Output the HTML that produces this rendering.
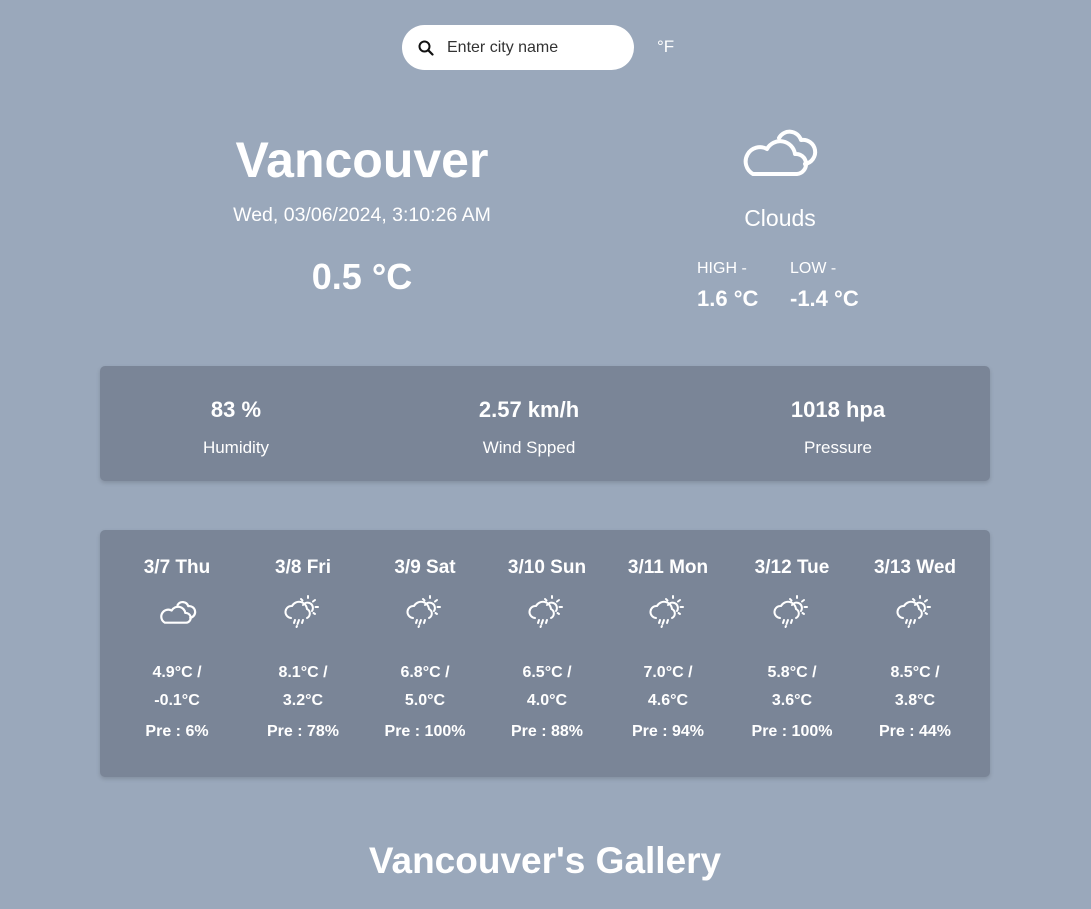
<!DOCTYPE html>
<html><head><meta charset="utf-8"><style>
*{margin:0;padding:0;box-sizing:border-box}
body{width:1091px;height:909px;background:#9aa8bb;font-family:"Liberation Sans","DejaVu Sans",sans-serif;color:#fff;position:relative;overflow:hidden}
.a{position:absolute;white-space:nowrap}
.c{transform:translateX(-50%);text-align:center}
.search{left:402px;top:25px;width:232px;height:45px;background:#fff;border-radius:23px}
.search span{position:absolute;left:45px;top:14px;color:#333;font-size:16px}
.panel{position:absolute;left:100px;width:890px;background:#7a8597;border-radius:5px;box-shadow:0 2px 4px rgba(0,0,0,.15)}
.b{font-weight:bold}
</style></head><body>
<svg width="0" height="0" style="position:absolute"><defs>
<g id="cl" fill="none" stroke="#fff" stroke-linejoin="round" stroke-linecap="round"><path d="M38 14A12 12 0 0 1 60 16A10 10 0 0 1 64 40"/><path d="M12 50A13 13 0 0 1 26 25A15 15 0 0 1 54 30A10 10 0 0 1 56 50Z"/></g>
<g id="rn" fill="none" stroke="#fff" stroke-width="2" stroke-linecap="round"><path d="M9 25a6 6 0 0 1 1-12a8 8 0 0 1 15 3a5 5 0 0 1 0 9"/><path d="M21 12a5 5 0 0 1 9 6"/><path d="M26 3v2M33 7l-2 1.5M36 14h-2.5M33 21l-1.5-1M19 6l1.5 1.5"/><path d="M13 27l-1 3M17 27l-1.5 4M21 27l-1 3M15 33l-.5 1"/></g>
</defs></svg>
<div class="a search">
<svg style="position:absolute;left:16px;top:15px" width="16" height="16" viewBox="0 0 16 16"><circle cx="6.5" cy="6.5" r="5" fill="none" stroke="#111" stroke-width="2"/><path d="M10.2 10.2L14.5 14.5" stroke="#111" stroke-width="2.2" stroke-linecap="round"/></svg>
<span>Enter city name</span></div>
<div class="a" style="left:657px;top:37px;font-size:17px">°F</div>

<div class="a c b" style="left:362px;top:131px;font-size:50px">Vancouver</div>
<div class="a c" style="left:362px;top:204px;font-size:19.5px">Wed, 03/06/2024, 3:10:26 AM</div>
<div class="a c b" style="left:362px;top:256px;font-size:36px">0.5 °C</div>

<svg class="a" style="left:741px;top:124px" width="78" height="54" viewBox="0 0 78 54" stroke-width="4"><use href="#cl"/></svg>
<div class="a c" style="left:780px;top:205px;font-size:23px">Clouds</div>
<div class="a" style="left:697px;top:260px;font-size:16px">HIGH -</div>
<div class="a b" style="left:697px;top:286px;font-size:22px">1.6 °C</div>
<div class="a" style="left:790px;top:260px;font-size:16px">LOW -</div>
<div class="a b" style="left:790px;top:286px;font-size:22px">-1.4 °C</div>

<div class="panel" style="top:366px;height:115px"></div>
<div class="a c b" style="left:236px;top:397px;font-size:22px">83 %</div>
<div class="a c" style="left:236px;top:438px;font-size:17px">Humidity</div>
<div class="a c b" style="left:529px;top:397px;font-size:22px">2.57 km/h</div>
<div class="a c" style="left:529px;top:438px;font-size:17px">Wind Spped</div>
<div class="a c b" style="left:838px;top:397px;font-size:22px">1018 hpa</div>
<div class="a c" style="left:838px;top:438px;font-size:17px">Pressure</div>

<div class="panel" style="top:530px;height:247px"></div>
<div class="a c b" style="left:177px;top:557px;font-size:19px">3/7 Thu</div>
<div class="a c b" style="left:303px;top:557px;font-size:19px">3/8 Fri</div>
<div class="a c b" style="left:425px;top:557px;font-size:19px">3/9 Sat</div>
<div class="a c b" style="left:547px;top:557px;font-size:19px">3/10 Sun</div>
<div class="a c b" style="left:668px;top:557px;font-size:19px">3/11 Mon</div>
<div class="a c b" style="left:792px;top:557px;font-size:19px">3/12 Tue</div>
<div class="a c b" style="left:915px;top:557px;font-size:19px">3/13 Wed</div>

<svg class="a" style="left:159px;top:598px" width="38" height="27" viewBox="0 0 78 54" stroke-width="4.5"><use href="#cl"/></svg>
<svg class="a" style="left:282px;top:593px" width="40" height="38" viewBox="0 0 40 38"><use href="#rn"/></svg>
<svg class="a" style="left:404px;top:593px" width="40" height="38" viewBox="0 0 40 38"><use href="#rn"/></svg>
<svg class="a" style="left:526px;top:593px" width="40" height="38" viewBox="0 0 40 38"><use href="#rn"/></svg>
<svg class="a" style="left:647px;top:593px" width="40" height="38" viewBox="0 0 40 38"><use href="#rn"/></svg>
<svg class="a" style="left:771px;top:593px" width="40" height="38" viewBox="0 0 40 38"><use href="#rn"/></svg>
<svg class="a" style="left:894px;top:593px" width="40" height="38" viewBox="0 0 40 38"><use href="#rn"/></svg>

<div class="a c b" style="left:177px;top:659px;font-size:16px;line-height:28px">4.9°C /<br>-0.1°C</div>
<div class="a c b" style="left:303px;top:659px;font-size:16px;line-height:28px">8.1°C /<br>3.2°C</div>
<div class="a c b" style="left:425px;top:659px;font-size:16px;line-height:28px">6.8°C /<br>5.0°C</div>
<div class="a c b" style="left:547px;top:659px;font-size:16px;line-height:28px">6.5°C /<br>4.0°C</div>
<div class="a c b" style="left:668px;top:659px;font-size:16px;line-height:28px">7.0°C /<br>4.6°C</div>
<div class="a c b" style="left:792px;top:659px;font-size:16px;line-height:28px">5.8°C /<br>3.6°C</div>
<div class="a c b" style="left:915px;top:659px;font-size:16px;line-height:28px">8.5°C /<br>3.8°C</div>

<div class="a c b" style="left:177px;top:723px;font-size:16px">Pre : 6%</div>
<div class="a c b" style="left:303px;top:723px;font-size:16px">Pre : 78%</div>
<div class="a c b" style="left:425px;top:723px;font-size:16px">Pre : 100%</div>
<div class="a c b" style="left:547px;top:723px;font-size:16px">Pre : 88%</div>
<div class="a c b" style="left:668px;top:723px;font-size:16px">Pre : 94%</div>
<div class="a c b" style="left:792px;top:723px;font-size:16px">Pre : 100%</div>
<div class="a c b" style="left:915px;top:723px;font-size:16px">Pre : 44%</div>

<div class="a c b" style="left:545px;top:840px;font-size:37px">Vancouver's Gallery</div>
</body></html>
